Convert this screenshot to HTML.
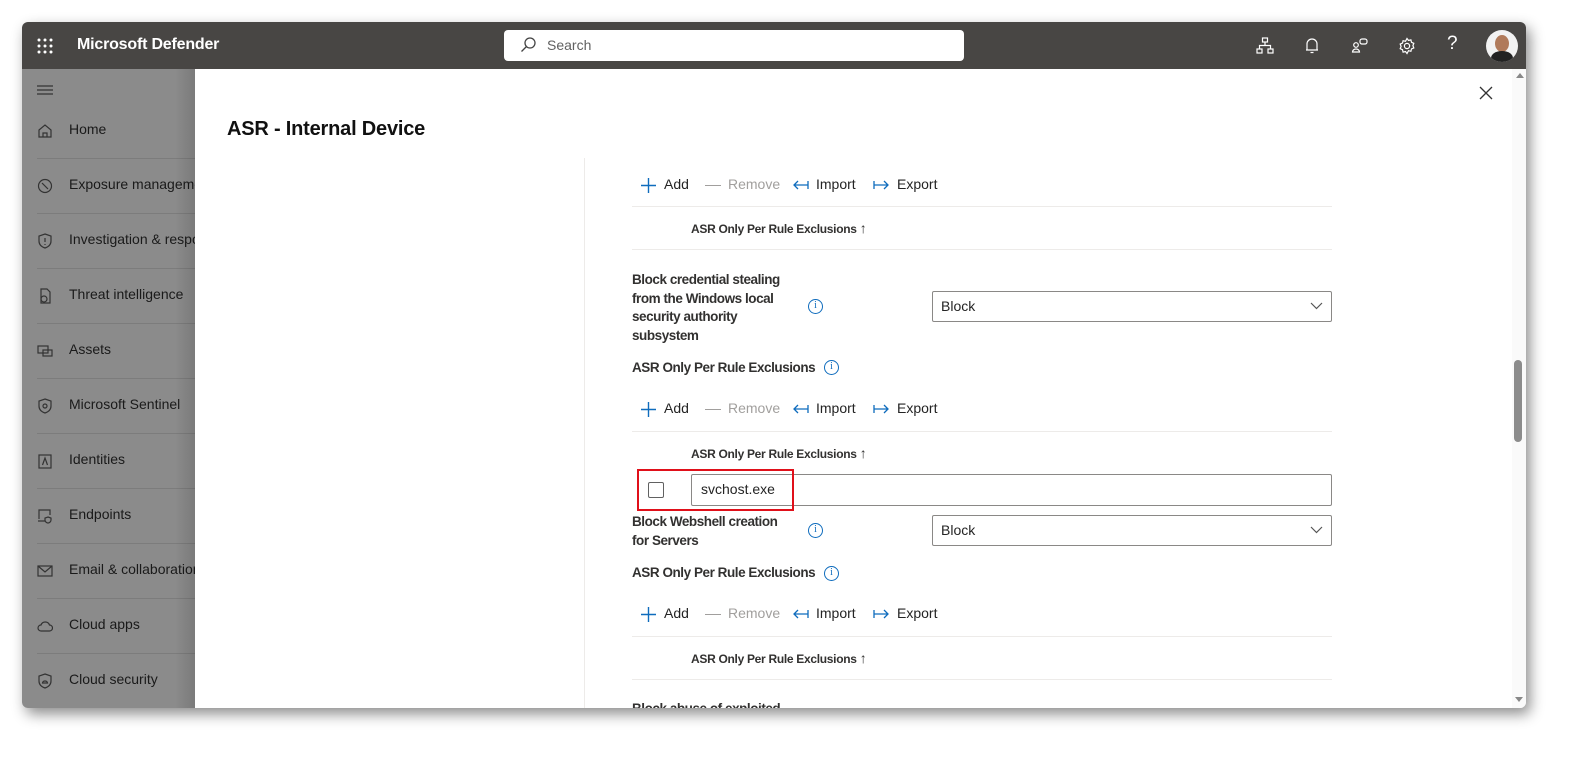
<!DOCTYPE html>
<html><head><meta charset="utf-8"><style>
*{box-sizing:border-box;margin:0;padding:0}
body{width:1593px;height:761px;background:#fff;font-family:"Segoe UI","Liberation Sans",sans-serif;position:relative;overflow:hidden;color:#242424}
.win{position:absolute;left:22px;top:22px;width:1504px;height:686px;border-radius:6px;overflow:hidden;box-shadow:4px 6px 14px rgba(0,0,0,.45);background:#fff}
.hdr{position:absolute;left:0;top:0;width:1504px;height:47px;background:#484644}
.brand{position:absolute;left:55px;top:14px;color:#fff;font-weight:bold;font-size:16px;letter-spacing:-0.2px}
.search{position:absolute;left:482px;top:8px;width:460px;height:31px;background:#fff;border-radius:4px}
.search span{position:absolute;left:43px;top:7px;font-size:14px;color:#616161}
.side{position:absolute;left:0;top:47px;width:173px;height:639px;background:#8b8b8b}
.side:after{content:"";position:absolute;right:0;top:0;width:20px;height:100%;background:linear-gradient(90deg,rgba(0,0,0,0),rgba(0,0,0,.12))}
.it{position:absolute;left:47px;font-size:14px;color:#1a1a1a;white-space:nowrap}
.ln{position:absolute;left:15px;width:160px;height:1px;background:#7c7c7c}
.ic{position:absolute;left:15px;width:16px;height:16px}
.panel{position:absolute;left:173px;top:47px;width:1317px;height:639px;background:#fff}
.sb{position:absolute;left:1490px;top:47px;width:14px;height:639px;background:#fafafa}
.t{position:absolute;white-space:nowrap}
.title{font-size:20px;font-weight:bold;color:#111;letter-spacing:-0.2px}
.tb{font-size:14px}
.hl{position:absolute;left:632px;width:700px;height:1px;background:#edebe9}
.colh{font-size:12px;font-weight:bold;color:#323130;letter-spacing:-0.3px}
.lbl{font-size:13.5px;font-weight:bold;color:#323130;line-height:18.5px;letter-spacing:-0.45px}
.dd{position:absolute;left:932px;width:400px;height:31px;border:1px solid #8a8886;border-radius:2px;font-size:14px;padding:6px 8px}
.info{position:absolute;width:15px;height:15px;border:1.3px solid #0f6cbd;border-radius:50%;color:#0f6cbd;font-size:10px;text-align:center;line-height:12px;font-family:"Liberation Serif",serif}
</style></head><body>
<div class="win">
 <div class="hdr">
  <svg style="position:absolute;left:15px;top:16px" width="16" height="16" fill="#fff"><circle cx="2" cy="2" r="1.5"/><circle cx="8" cy="2" r="1.5"/><circle cx="14" cy="2" r="1.5"/><circle cx="2" cy="8" r="1.5"/><circle cx="8" cy="8" r="1.5"/><circle cx="14" cy="8" r="1.5"/><circle cx="2" cy="14" r="1.5"/><circle cx="8" cy="14" r="1.5"/><circle cx="14" cy="14" r="1.5"/></svg>
  <div class="brand">Microsoft Defender</div>
  <div class="search"><svg style="position:absolute;left:16px;top:7px" width="16" height="16" fill="none" stroke="#444" stroke-width="1.3"><circle cx="10" cy="6" r="5"/><path d="M6.5 9.5L1.5 14.5"/></svg><span>Search</span></div>
  <svg style="position:absolute;left:1234px;top:15px" width="18" height="18" fill="none" stroke="#fff" stroke-width="1.2"><rect x="6.5" y="1" width="5" height="4"/><rect x="1" y="12" width="5" height="4"/><rect x="12" y="12" width="5" height="4"/><path d="M9 5v3.5M3.5 12V8.5h11V12"/></svg>
  <svg style="position:absolute;left:1282px;top:15px" width="16" height="18" fill="none" stroke="#fff" stroke-width="1.2"><path d="M3 13V7a5 5 0 0110 0v6zM2 13h12M6.5 15.5h3"/></svg>
  <svg style="position:absolute;left:1329px;top:15px" width="18" height="18" fill="none" stroke="#fff" stroke-width="1.2"><circle cx="5" cy="8" r="2.3"/><path d="M1.5 15a3.5 3 0 017 0z"/><rect x="9" y="2" width="7" height="5" rx="2"/></svg>
  <svg style="position:absolute;left:1376px;top:15px" width="18" height="18" fill="none" stroke="#fff" stroke-width="1.2"><circle cx="9" cy="9" r="2.6"/><path d="M9 1.5l1.5 2 2.4-.6.6 2.4 2.3 1-.9 2.3.9 2.3-2.3 1-.6 2.4-2.4-.6L9 16.5l-1.5-2-2.4.6-.6-2.4-2.3-1L3.1 9.4 2.2 7.1l2.3-1 .6-2.4 2.4.6z"/></svg>
  <div class="t" style="left:1425px;top:11px;color:#fff;font-size:19px">?</div>
  <div style="position:absolute;left:1464px;top:8px;width:32px;height:32px;border-radius:50%;background:#f2f2f2;overflow:hidden"><div style="position:absolute;left:9px;top:5px;width:14px;height:17px;border-radius:50%;background:#b07a5a"></div><div style="position:absolute;left:5px;top:21px;width:22px;height:14px;border-radius:50%;background:#222"></div></div>
 </div>
 <div class="side">
  <svg style="position:absolute;left:15px;top:15px" width="16" height="12" stroke="#333" stroke-width="1.2"><path d="M0 2h16M0 6h16M0 10h16"/></svg>
  <div class="it" style="top:52px">Home</div><svg class="ic" style="top:54px" fill="none" stroke="#333" stroke-width="1.2"><path d="M2 7l6-5 6 5v7H2zM6 14v-4h4v4"/></svg>
  <div class="ln" style="top:89px"></div>
  <div class="it" style="top:107px">Exposure management</div><svg class="ic" style="top:109px" fill="none" stroke="#333" stroke-width="1.2"><circle cx="8" cy="8" r="6.5"/><path d="M5 5l6 6"/></svg>
  <div class="ln" style="top:144px"></div>
  <div class="it" style="top:162px">Investigation &amp; response</div><svg class="ic" style="top:164px" fill="none" stroke="#333" stroke-width="1.2"><path d="M8 1l6 2v5c0 4-3 6-6 7-3-1-6-3-6-7V3zM8 5v4M8 11v1"/></svg>
  <div class="ln" style="top:199px"></div>
  <div class="it" style="top:217px">Threat intelligence</div><svg class="ic" style="top:219px" fill="none" stroke="#333" stroke-width="1.2"><path d="M4 1h6l3 3v11H4z"/><circle cx="7" cy="11" r="3"/></svg>
  <div class="ln" style="top:254px"></div>
  <div class="it" style="top:272px">Assets</div><svg class="ic" style="top:274px" fill="none" stroke="#333" stroke-width="1.2"><rect x="1" y="3" width="10" height="7"/><rect x="6" y="7" width="9" height="6"/></svg>
  <div class="ln" style="top:309px"></div>
  <div class="it" style="top:327px">Microsoft Sentinel</div><svg class="ic" style="top:329px" fill="none" stroke="#333" stroke-width="1.2"><path d="M8 1l6 2v5c0 4-3 6-6 7-3-1-6-3-6-7V3z"/><circle cx="8" cy="8" r="2"/></svg>
  <div class="ln" style="top:364px"></div>
  <div class="it" style="top:382px">Identities</div><svg class="ic" style="top:384px" fill="none" stroke="#333" stroke-width="1.2"><rect x="2" y="2" width="12" height="13"/><path d="M5.5 12l2.5-7 2.5 7"/></svg>
  <div class="ln" style="top:419px"></div>
  <div class="it" style="top:437px">Endpoints</div><svg class="ic" style="top:439px" fill="none" stroke="#333" stroke-width="1.2"><path d="M2 11V2h11v5M1 13h7"/><path d="M11 9l3 1v2c0 2-2 3-3 3-1 0-3-1-3-3v-2z"/></svg>
  <div class="ln" style="top:474px"></div>
  <div class="it" style="top:492px">Email &amp; collaboration</div><svg class="ic" style="top:494px" fill="none" stroke="#333" stroke-width="1.2"><rect x="1" y="3" width="14" height="10"/><path d="M1 3l7 6 7-6"/></svg>
  <div class="ln" style="top:529px"></div>
  <div class="it" style="top:547px">Cloud apps</div><svg class="ic" style="top:549px" fill="none" stroke="#333" stroke-width="1.2"><path d="M4 13a3 3 0 010-6 4.5 4.5 0 018.5 0 3 3 0 010 6z"/></svg>
  <div class="ln" style="top:584px"></div>
  <div class="it" style="top:602px">Cloud security</div><svg class="ic" style="top:604px" fill="none" stroke="#333" stroke-width="1.2"><path d="M8 1l6 2v5c0 4-3 6-6 7-3-1-6-3-6-7V3z"/><path d="M5.5 10a2.5 2 0 015 0z"/></svg>
 </div>
 <div class="panel"></div>
 <div class="sb"><div style="position:absolute;left:4px;top:4px;border:4px solid transparent;border-bottom:5px solid #888;border-top:0"></div><div style="position:absolute;left:2px;top:291px;width:8px;height:82px;border-radius:4px;background:#8c8c8c"></div><div style="position:absolute;left:3px;top:628px;border:4px solid transparent;border-top:5px solid #888;border-bottom:0"></div></div>
</div>

<div class="t title" style="left:227px;top:118px">ASR - Internal Device</div>
<svg style="position:absolute;left:1479px;top:86px" width="14" height="14" stroke="#333" stroke-width="1.3"><path d="M1 1l12 12M13 1L1 13"/></svg>
<div style="position:absolute;left:584px;top:158px;width:1px;height:550px;background:#edebe9"></div>

<svg style="position:absolute;left:640px;top:177px" width="17" height="17" stroke="#0f6cbd" stroke-width="1.4"><path d="M8.5 1v15M1 8.5h15"/></svg>
<div class="t tb" style="left:664px;top:176px">Add</div>
<div style="position:absolute;left:705px;top:185px;width:16px;height:1px;background:#a19f9d"></div>
<div class="t tb" style="left:728px;top:176px;color:#a19f9d">Remove</div>
<svg style="position:absolute;left:793px;top:179px" width="16" height="12" fill="none" stroke="#0f6cbd" stroke-width="1.3"><path d="M1 6h14M5 2L1 6l4 4M15 2v8"/></svg>
<div class="t tb" style="left:816px;top:176px">Import</div>
<svg style="position:absolute;left:873px;top:179px" width="16" height="12" fill="none" stroke="#0f6cbd" stroke-width="1.3"><path d="M1 6h14M11 2l4 4-4 4M1 2v8"/></svg>
<div class="t tb" style="left:897px;top:176px">Export</div>
<div class="hl" style="top:206px"></div>
<div class="t colh" style="left:691px;top:220px">ASR Only Per Rule Exclusions <span style="font-weight:normal;font-size:14px">↑</span></div>
<div class="hl" style="top:249px"></div>

<div class="t lbl" style="left:632px;top:271px">Block credential stealing<br>from the Windows local<br>security authority<br>subsystem</div>
<div class="info" style="left:808px;top:299px">i</div>
<div class="dd" style="top:291px">Block<svg style="position:absolute;right:8px;top:10px" width="13" height="8" fill="none" stroke="#555" stroke-width="1.2"><path d="M1 1l5.5 5.5L12 1"/></svg></div>
<div class="t lbl" style="left:632px;top:359px">ASR Only Per Rule Exclusions</div>
<div class="info" style="left:824px;top:360px">i</div>

<svg style="position:absolute;left:640px;top:401px" width="17" height="17" stroke="#0f6cbd" stroke-width="1.4"><path d="M8.5 1v15M1 8.5h15"/></svg>
<div class="t tb" style="left:664px;top:400px">Add</div>
<div style="position:absolute;left:705px;top:409px;width:16px;height:1px;background:#a19f9d"></div>
<div class="t tb" style="left:728px;top:400px;color:#a19f9d">Remove</div>
<svg style="position:absolute;left:793px;top:403px" width="16" height="12" fill="none" stroke="#0f6cbd" stroke-width="1.3"><path d="M1 6h14M5 2L1 6l4 4M15 2v8"/></svg>
<div class="t tb" style="left:816px;top:400px">Import</div>
<svg style="position:absolute;left:873px;top:403px" width="16" height="12" fill="none" stroke="#0f6cbd" stroke-width="1.3"><path d="M1 6h14M11 2l4 4-4 4M1 2v8"/></svg>
<div class="t tb" style="left:897px;top:400px">Export</div>
<div class="hl" style="top:431px"></div>
<div class="t colh" style="left:691px;top:445px">ASR Only Per Rule Exclusions <span style="font-weight:normal;font-size:14px">↑</span></div>
<div style="position:absolute;left:648px;top:482px;width:16px;height:16px;border:1px solid #616161;border-radius:2px"></div>
<div style="position:absolute;left:691px;top:474px;width:641px;height:32px;border:1px solid #8a8886;border-radius:2px;font-size:14px;padding:6px 9px">svchost.exe</div>
<div style="position:absolute;left:637px;top:469px;width:157px;height:42px;border:2px solid #e0101a"></div>

<div class="t lbl" style="left:632px;top:513px">Block Webshell creation<br>for Servers</div>
<div class="info" style="left:808px;top:523px">i</div>
<div class="dd" style="top:515px">Block<svg style="position:absolute;right:8px;top:10px" width="13" height="8" fill="none" stroke="#555" stroke-width="1.2"><path d="M1 1l5.5 5.5L12 1"/></svg></div>
<div class="t lbl" style="left:632px;top:564px">ASR Only Per Rule Exclusions</div>
<div class="info" style="left:824px;top:566px">i</div>

<svg style="position:absolute;left:640px;top:606px" width="17" height="17" stroke="#0f6cbd" stroke-width="1.4"><path d="M8.5 1v15M1 8.5h15"/></svg>
<div class="t tb" style="left:664px;top:605px">Add</div>
<div style="position:absolute;left:705px;top:614px;width:16px;height:1px;background:#a19f9d"></div>
<div class="t tb" style="left:728px;top:605px;color:#a19f9d">Remove</div>
<svg style="position:absolute;left:793px;top:608px" width="16" height="12" fill="none" stroke="#0f6cbd" stroke-width="1.3"><path d="M1 6h14M5 2L1 6l4 4M15 2v8"/></svg>
<div class="t tb" style="left:816px;top:605px">Import</div>
<svg style="position:absolute;left:873px;top:608px" width="16" height="12" fill="none" stroke="#0f6cbd" stroke-width="1.3"><path d="M1 6h14M11 2l4 4-4 4M1 2v8"/></svg>
<div class="t tb" style="left:897px;top:605px">Export</div>
<div class="hl" style="top:636px"></div>
<div class="t colh" style="left:691px;top:650px">ASR Only Per Rule Exclusions <span style="font-weight:normal;font-size:14px">↑</span></div>
<div class="hl" style="top:679px"></div>
<div style="position:absolute;left:600px;top:700px;width:500px;height:8px;overflow:hidden"><div class="t lbl" style="left:32px;top:0">Block abuse of exploited</div></div>
</body></html>
